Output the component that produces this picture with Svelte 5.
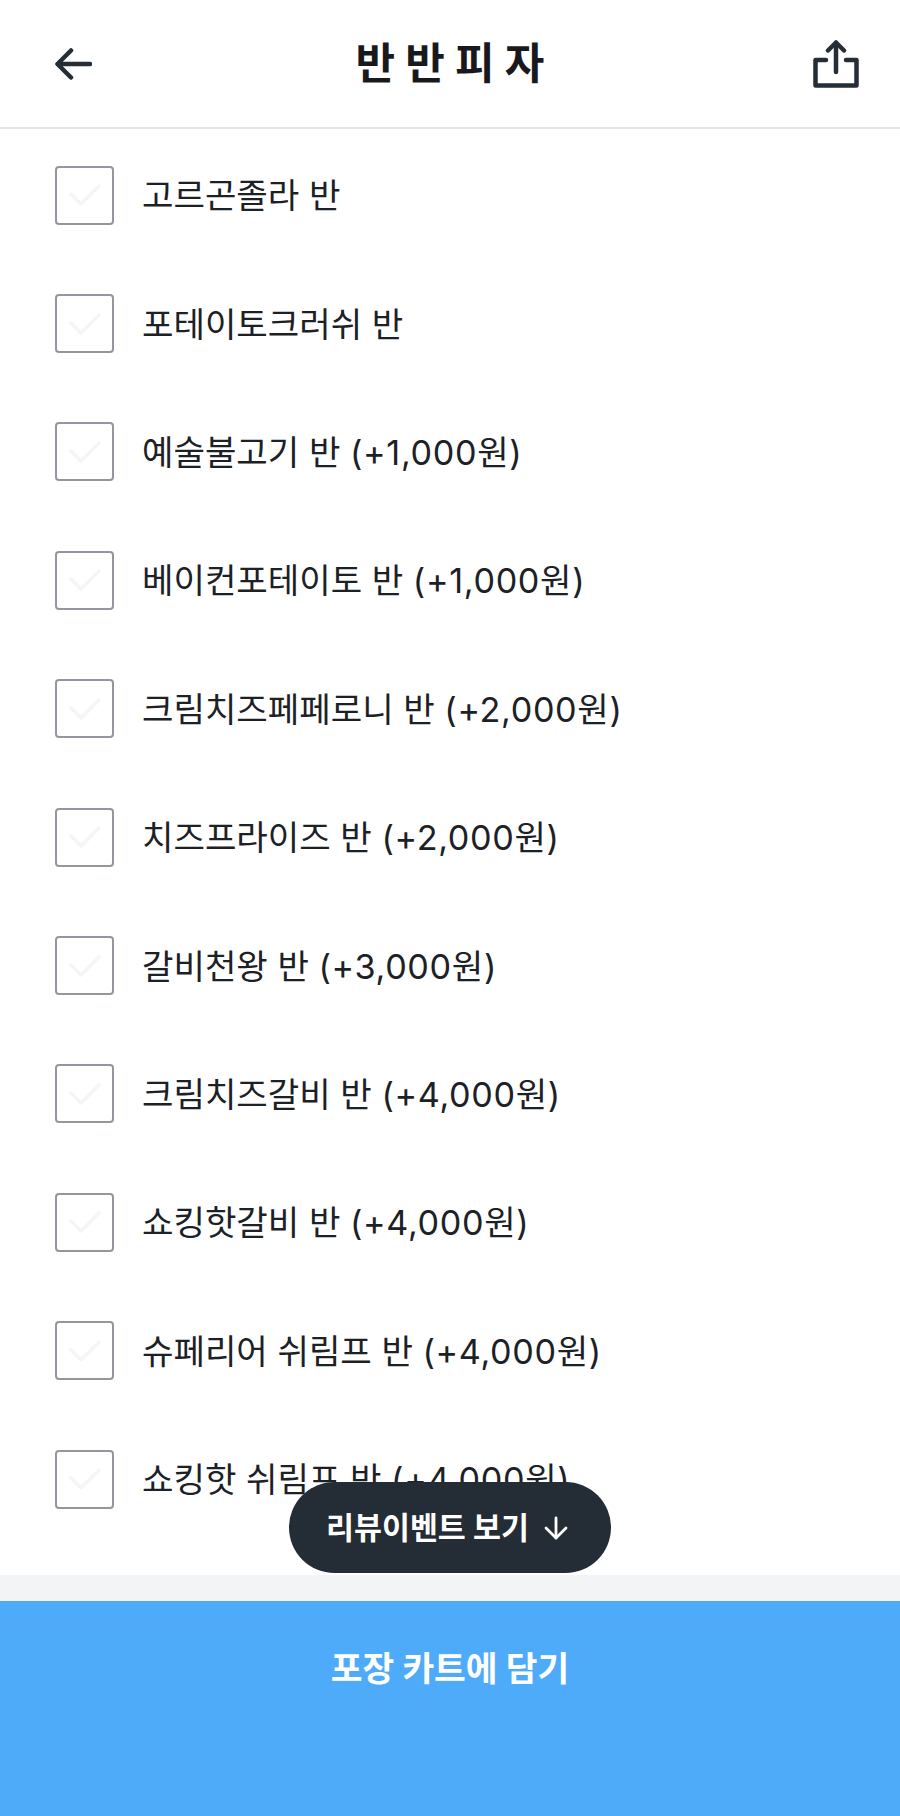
<script lang="ts">
  const options = [
    { name: '고르곤졸라 반' },
    { name: '포테이토크러쉬 반' },
    { name: '예술불고기 반', price: '(+1,000원)' },
    { name: '베이컨포테이토 반', price: '(+1,000원)' },
    { name: '크림치즈페페로니 반', price: '(+2,000원)' },
    { name: '치즈프라이즈 반', price: '(+2,000원)' },
    { name: '갈비천왕 반', price: '(+3,000원)' },
    { name: '크림치즈갈비 반', price: '(+4,000원)' },
    { name: '쇼킹핫갈비 반', price: '(+4,000원)' },
    { name: '슈페리어 쉬림프 반', price: '(+4,000원)' },
    { name: '쇼킹핫 쉬림프 반', price: '(+4,000원)' }
  ]
</script>

<div class="page">
  <header class="top-bar">
    <button class="icon-btn" aria-label="뒤로">
      <svg width="37" height="32" viewBox="0 0 37 32" fill="none" stroke="#252d36" stroke-width="4.5" stroke-linecap="round" stroke-linejoin="round">
        <path d="M3 16H35" />
        <path d="M16 2.5L2.5 16L16 29.5" />
      </svg>
    </button>
    <h1 class="title">반 반 피 자</h1>
    <button class="icon-btn" aria-label="공유">
      <svg width="46" height="48" viewBox="0 0 46 48" fill="none" stroke="#252d36" stroke-width="4.5" stroke-linecap="round" stroke-linejoin="round">
        <path d="M23 32V3" />
        <path d="M15 10.5L23 2.5L31 10.5" />
        <path d="M13 20H2.5V45.5H43.5V20H33" />
      </svg>
    </button>
  </header>

  <div class="option-list">
    {#each options as option}
      <label class="option">
        <span class="checkbox">
          <svg width="34" height="26" viewBox="0 0 34 26" fill="none" stroke="#f4f5f6" stroke-width="3.5" stroke-linecap="round" stroke-linejoin="round">
            <path d="M3 12L13 22L31 4" />
          </svg>
        </span>
        <span class="option-label">
          {option.name}
          {#if option.price}
            <span class="price">{option.price}</span>
          {/if}
        </span>
      </label>
    {/each}
    <button class="review-pill">
      <span class="pill-text">리뷰이벤트 보기</span>
      <svg width="24" height="24" viewBox="0 0 24 24" fill="none" stroke="#fff" stroke-width="2.8" stroke-linecap="round" stroke-linejoin="round">
        <path d="M12 2V22" />
        <path d="M2 12L12 22L22 12" />
      </svg>
    </button>
  </div>

  <div class="divider"></div>

  <div class="cart-bar">포장 카트에 담기</div>
</div>

<style>
  :global(body) {
    margin: 0;
    background: #fff;
  }

  .page {
    width: 900px;
    height: 1816px;
    display: flex;
    flex-direction: column;
    font-family: Inter, "Noto Sans CJK KR", sans-serif;
    color: #1c2126;
  }

  .top-bar {
    height: 127px;
    flex-shrink: 0;
    display: flex;
    align-items: center;
    justify-content: space-between;
    padding: 0 41px 0 55px;
    border-bottom: 2px solid #e4e5e7;
  }

  .icon-btn {
    padding: 0;
    border: 0;
    background: transparent;
    display: flex;
  }

  .title {
    margin: 0 5px 8px 0;
    font-size: 43px;
    font-weight: 700;
    color: #17191c;
  }

  .option-list {
    position: relative;
    flex: 1;
    overflow: hidden;
    padding: 2px 0 0 55px;
  }

  .option {
    height: 128.4px;
    display: flex;
    align-items: center;
    gap: 28px;
  }

  .checkbox {
    width: 59px;
    height: 59px;
    box-sizing: border-box;
    border: 2px solid #92969f;
    border-radius: 4px;
    display: flex;
    align-items: center;
    justify-content: center;
    flex-shrink: 0;
  }

  .option-label {
    font-size: 34.2px;
    white-space: nowrap;
    padding-bottom: 4px;
  }

  .price {
    letter-spacing: 0.65px;
  }

  .review-pill {
    position: absolute;
    left: 289px;
    bottom: 2px;
    width: 322px;
    height: 91px;
    box-sizing: border-box;
    padding: 0 6px 0 0;
    border: 0;
    border-radius: 46px;
    background: #242c35;
    color: #fff;
    font-family: inherit;
    font-size: 30.4px;
    font-weight: 700;
    display: flex;
    align-items: center;
    justify-content: center;
    gap: 15px;
  }

  .pill-text {
    padding-bottom: 3px;
  }

  .divider {
    height: 26px;
    flex-shrink: 0;
    background: #f3f4f6;
  }

  .cart-bar {
    height: 215px;
    flex-shrink: 0;
    box-sizing: border-box;
    padding-top: 40px;
    background: #4eabfa;
    color: #fff;
    font-size: 34.5px;
    font-weight: 700;
    text-align: center;
  }
</style>
